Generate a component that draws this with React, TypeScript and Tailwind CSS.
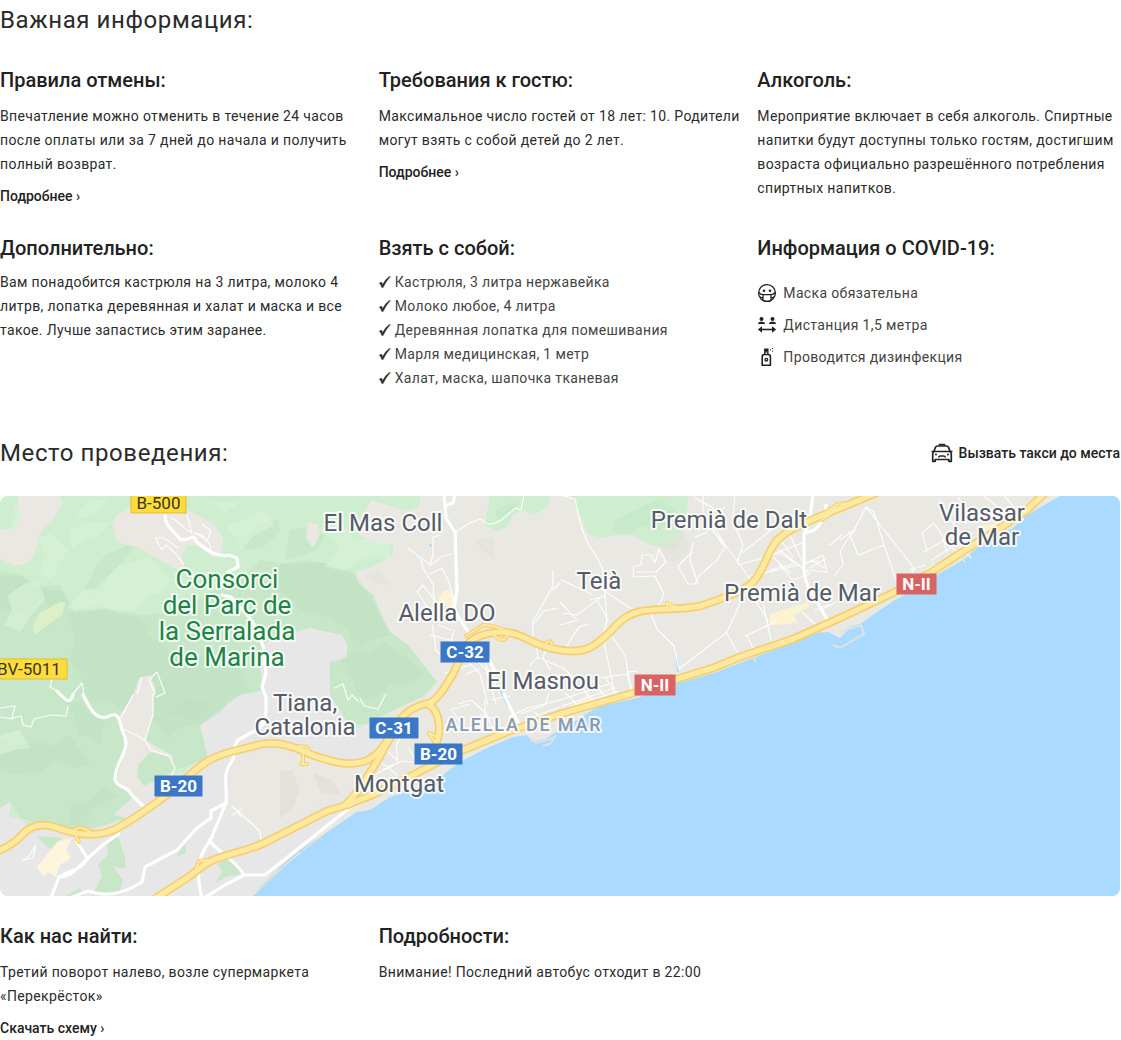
import type { ReactNode } from "react";

const BODY = "text-sm leading-6 tracking-wide text-[#2b2b2b]";

function SectionTitle({ children }: { children: ReactNode }) {
  return <h2 className="text-2xl leading-8 tracking-wide text-[#2b2b2b]">{children}</h2>;
}

function BlockTitle({ children }: { children: ReactNode }) {
  return <h3 className="text-xl leading-8 font-medium text-[#222]">{children}</h3>;
}

function MoreLink({ children }: { children: ReactNode }) {
  return (
    <a href="#" className="mt-2 block w-fit text-sm leading-6 font-medium text-[#222] hover:underline">
      {children} ›
    </a>
  );
}

function InfoBlock({ title, text, link }: { title: string; text: string; link?: string }) {
  return (
    <section>
      <BlockTitle>{title}</BlockTitle>
      <p className={`mt-2 ${BODY}`}>{text}</p>
      {link && <MoreLink>{link}</MoreLink>}
    </section>
  );
}

function CheckIcon() {
  return (
    <svg viewBox="0 0 12 12" className="h-3 w-3 shrink-0" fill="#333" stroke="#333" strokeWidth="0.4" aria-hidden="true">
      <path d="M0.3 7.2 2.200 6c.8.7 1.200 1.400 1.500 2.400C5.500 5 7.700 2.300 10.800 0.300l.6.500C8.600 3.600 6.300 7 4.400 11.200l-1.500.6C2.500 10 1.500 8.400.3 7.200z" />
    </svg>
  );
}

function MaskIcon() {
  return (
    <svg viewBox="0 0 20 20" className="h-5 w-5 shrink-0" fill="none" stroke="#222" strokeWidth="1.3" aria-hidden="true">
      <circle cx="10" cy="10" r="8.400" />
      <path d="M1.800 9.300C3 11 4.500 11.600 6 11.600h8c1.500 0 3-.6 4.200-2.300M6 11.600v4.800c0 1.100 1.300 2 4 2s4-.9 4-2v-4.800M2.400 13.400c1 1 2.200 1.500 3.600 1.600M17.600 13.400c-1 1-2.200 1.500-3.600 1.600" />
      <circle cx="7" cy="7.700" r="1.300" fill="#222" stroke="none" />
      <circle cx="13" cy="7.700" r="1.300" fill="#222" stroke="none" />
    </svg>
  );
}

function DistanceIcon() {
  return (
    <svg viewBox="0 0 20 20" className="h-5 w-5 shrink-0" fill="#222" aria-hidden="true">
      <circle cx="4.500" cy="3.900" r="2" />
      <circle cx="15.500" cy="3.900" r="2" />
      <path d="M1 9c0-1.700 1.400-2.300 3.500-2.300S8 7.300 8 9zM12 9c0-1.700 1.400-2.300 3.500-2.300S19 7.300 19 9z" />
      <path d="M3 14.500h14" stroke="#222" strokeWidth="1.600" />
      <path d="M5 11.300v6.400L.8 14.500zM15 11.300v6.400l4.200-3.200z" />
    </svg>
  );
}

function SprayIcon() {
  return (
    <svg viewBox="0 0 20 20" className="h-5 w-5 shrink-0" fill="none" stroke="#222" strokeWidth="1.600" aria-hidden="true">
      <path d="M5.200 18.200V9.800c0-1.500.9-2.300 2.200-2.300h3.800c1.300 0 2.200.8 2.200 2.300v8.400z" />
      <path d="M7.700 7V4.800h3.200V7" strokeWidth="1.300" />
      <path d="M7 4.600V2.600c0-.7.400-1.100 1-1.100h3.500v3.100z" fill="#222" stroke="none" />
      <circle cx="9.300" cy="12.700" r="1.300" strokeWidth="1.400" />
      <path d="M13 2.800h1M15 1.500h1M15 4.100h1" strokeWidth="1" />
    </svg>
  );
}

function TaxiIcon() {
  return (
    <svg viewBox="0 0 22 20" className="h-5 w-[22px] shrink-0" fill="none" stroke="#222" strokeWidth="1.700" strokeLinejoin="round" aria-hidden="true">
      <path d="M8.500 2.600V1.600h5v1" />
      <path d="M2.800 8.500 4.600 4.200c.4-.8 1-1.200 1.800-1.200h9.200c.8 0 1.400.4 1.800 1.200l1.800 4.300M.5 8.500h21" />
      <path d="M2.800 8.500c-.8.800-1.100 1.600-1.100 2.600v7.200h2.400v-1.800h13.800v1.800h2.400v-7.200c0-1-.3-1.800-1.100-2.600" />
      <path d="M7.500 14.700c.2-1.200.9-1.700 2-1.700h3c1.100 0 1.800.5 2 1.700" strokeWidth="1.400" />
      <path d="M4 11.500h2M16 11.500h2" strokeWidth="1.600" />
    </svg>
  );
}

const TO_BRING = [
  "Кастрюля, 3 литра нержавейка",
  "Молоко любое, 4 литра",
  "Деревянная лопатка для помешивания",
  "Марля медицинская, 1 метр",
  "Халат, маска, шапочка тканевая",
];

const COVID = [
  { icon: <MaskIcon />, text: "Маска обязательна" },
  { icon: <DistanceIcon />, text: "Дистанция 1,5 метра" },
  { icon: <SprayIcon />, text: "Проводится дизинфекция" },
];

const HIGHWAYS = [
  "M-4 852C6 848 12 844 17 840C23 834 28 826 43 825C56 825 66 833 83 834C106 836 117 830 143 812L167 795C178 787 182 781 190 775C202 763 213 757 230 752L262 744C284 741 298 749 315 756C334 762 347 766 362 762C377 758 385 745 392 732C400 716 411 706 430 703C440 697 447 684 454 672L463 652C468 638 483 633 500 632C525 632 530 646 560 650C590 655 598 642 610 632C622 618 631 613 642 611C665 608 682 610 700 606C720 600 745 590 752 583C766 570 768 545 782 536C795 525 825 515 876 493",
  "M156 898L187 878L207 863C225 853 249 852 270 840L327 811L344 806C358 795 371 770 378 760C386 744 391 735 397 728",
  "M348 805C357 800 370 797 380 791L413 775L440 761L463 750L507 732L560 714L637 692L677 679L713 668L740 657L793 639L840 618L893 593L930 573L973 545L1000 528L1027 510L1046 492",
  "M428 704C441 711 441 732 436 745L428 757",
];

const RAMPS = [
  "M466 636L483 625C494 624 506 631 514 634",
  "M493 634C500 642 504 642 508 634",
  "M546 644C549 639 552 641 552 648",
  "M667 609V603L675 607",
  "M303 749V763M301 764H307M297 747C306 745 310 748 308 754",
  "M434 741L429 733L437 737",
  "M70 833C79 825 84 827 91 833M74 832L79 842",
  "M195 872L199 861L208 860",
  "M820 516L838 504L860 502M822 520L841 507",
];

const MAIN_WHITE = [
  "M57 691C67 702 70 704 73 695M83 695C92 712 96 719 107 717C117 711 119 716 122 730C134 750 114 761 115 780C118 789 127 785 131 794L145 808",
  "M165 515C165 526 173 530 180 539C190 543 193 531 196 541C210 554 221 557 229 555L237 558L238 567L228 572",
  "M222 595L231 597L247 615C258 625 260 640 263 646L266 673L262 687L266 697C266 710 267 719 260 728L238 740C232 747 236 755 232 761C221 776 228 783 226 803L211 811V818L197 828L177 850L145 867L142 882C125 893 108 898 88 891L70 898",
  "M51 898L59 877C70 869 80 872 88 858L104 844L119 834M88 859L77 842M60 877C72 877 80 865 88 858",
  "M226 803L210 841C197 856 196 876 202 898M209 840C218 853 233 857 244 875H265L352 806M204 898L225 885L244 875",
  "M444 494L446 518L455 532L457 590L454 610L472 638M447 505L453 503L455 494M487 655L495 672M504 694C512 713 517 720 522 729",
  "M813 494L810 518L804 535V565C802 580 812 592 815 598L828 621M826 505C825 522 815 533 806 532",
];

const MINOR_WHITE = [
  "M0 708L15 706L12 718L21 716L23 725L31 727L34 719L52 715L66 716L68 706M0 717L13 719M73 694L82 683L85 700",
  "M53 674L50 687L59 692M137 694L142 677M153 694L153 715L145 740L124 729M145 740L151 750L169 756L175 768L171 776M133 695L121 718M155 694L149 680L157 672L165 693L156 697",
  "M184 565L177 555L166 545L162 550L155 538L164 538L178 548M171 518C182 522 182 529 192 533L187 515M194 533C206 539 212 541 210 552M202 524L211 531L207 541L202 535L195 533",
  "M232 806L260 831L261 842M232 815L242 809M236 809L241 817M23 861C35 853 37 838 35 850L33 858L23 860",
  "M408 548L419 557L431 565L443 556L453 554M430 565L433 555V537L440 535M421 560C424 579 437 580 433 594L436 602M430 574L442 568L449 582L454 602M436 602L423 585L417 592L427 606L432 616",
  "M432 624L436 650L446 661M438 625L451 630M454 630L450 646L463 655M430 635L450 640M445 673L470 665M466 659L480 674L488 705M475 659L486 669L496 704M482 657L500 694M466 674L479 669M488 685L505 679",
  "M455 532L472 522L481 519C488 528 496 523 501 520L516 508L521 510L524 494M553 571V586L540 609L533 621V640M533 625L544 611L558 608M553 590L560 583M536 645L538 657L530 665",
  "M548 644L543 657L550 670M537 657L563 668L572 676",
  "M575 499L580 522C584 536 590 549 597 557L603 570L605 596L590 600M561 580L592 594M603 590L622 603L634 610M605 596L607 620L601 645M601 597L577 615L563 613M560 602L575 618M578 620L560 625M588 625C578 623 573 637 567 646M604 642L614 690M612 637L625 655L631 690M608 620L597 600",
  "M633 577L634 566L641 565L642 555H651L655 563L659 549L666 562L656 572H637M633 577L655 576L664 594L659 605M651 614L657 629L674 646L679 669",
  "M695 498L713 508L712 530L727 547L738 562L755 586M703 495V515L725 548L717 560L699 576L695 584H688L678 566L692 552M695 537L706 533L712 524L723 541M735 494L733 520L743 545L737 563M743 552L774 528M711 512L725 508M693 542L690 560L698 584",
  "M738 565L780 553L800 566M770 555L802 543M773 557L790 573M780 550L810 574M750 576L800 565M804 565L823 555L827 572L806 570M806 562L819 561M811 560L825 568M810 568L825 559M780 565L792 580L808 575M790 535L801 559M780 539L793 557M770 570L794 564",
  "M747 588L727 632L679 669M726 632L737 652M747 636L755 652M745 636L777 621M763 604L771 640M755 601L768 620M815 610L828 605M803 613L818 627M823 609L836 602",
  "M866 507L854 530L840 540M866 507L914 568L910 581M874 512L884 545L896 580M849 532L858 555L884 545M866 507L874 512M855 530L847 540L840 552M840 550L843 565L835 575M927 550L922 533L934 523L942 535L947 552M924 552L946 539M932 560L953 546M940 500L952 522L971 545M958 498L968 510L966 524M984 496L1014 520M1003 494L1024 520M950 535L971 558M943 539L959 554M910 570L925 565M912 580L934 565",
  "M560 495L575 499M840 600L850 594M830 545L842 535",
  "M458 704L471 700L486 713L495 735M450 710L470 704M453 712L460 722M485 700V724M490 700L510 696M510 716L528 708L560 700M520 714L545 705L549 693M525 720L560 707M535 712L545 724M480 715L500 720",
  "M560 700L612 683M562 706L615 688M570 707L619 691M600 678L627 674L632 690M627 672L638 671M565 693L580 707M580 686L595 703M592 681L606 697M605 677L617 695",
  "M372 755L397 775M383 769L402 761L420 763M376 774L394 765M398 762L396 745L405 731M405 735L418 737M386 750L397 760M409 748L415 760M360 698L364 706L378 709L386 694M335 688L343 684L348 700L352 695L358 701",
];

const SHADES = [
  "M0 570L20 575L38 588L60 590L68 600L64 612L52 610L40 600L22 612L0 610Z",
  "M66 614L84 611L105 610L118 614L140 617L150 628L148 636L160 640L172 655L190 660L208 652L230 650L240 668L250 690L228 700L222 712L200 725L178 716L150 722L125 715L112 700L96 704L80 690L82 678L69 660L76 640Z",
  "M85 590L94 570L105 555L122 548L140 535L128 556L110 575L104 586L95 600Z",
  "M280 565L304 560L325 563L338 572L355 574L366 590L380 615L390 635L372 640L355 650L347 628L330 618L300 610L288 595L275 590Z",
  "M290 530L308 527L325 535L318 548L305 555L285 560Z",
  "M65 700L82 703L90 714L105 722L100 745L88 736L78 735L74 716Z",
  "M0 740L20 745L38 740L52 746L70 735L90 765L72 768L55 760L40 772L18 775L0 770Z",
  "M70 805L90 800L105 787L118 796L94 807L90 815L85 825L70 825Z",
  "M340 660L352 650L370 652L385 642L404 656L425 675L408 684L390 685L376 698L360 700L352 680Z",
  "M155 720L172 712L185 698L215 702L192 725L178 728L168 740Z",
  "M236 540L248 534L256 524L278 520L280 532L262 548L246 550Z",
];

const HIGHLIGHTS = [
  "M38 540L50 533L68 550L60 562L52 580L42 576L40 568L46 556Z",
  "M67 608L84 590L96 588L120 565L136 562L148 556L158 566L170 580L160 592L150 595L136 610L120 612L98 606L75 610Z",
  "M90 500L108 500L95 514L75 520L80 508Z",
  "M8 595L24 584L38 580L45 600L34 612L20 632L5 625L12 610Z",
  "M320 530L338 515L344 526L355 540L390 541L390 558L374 556L360 560L344 570L325 567L334 556L340 545Z",
  "M70 530L88 522L110 523L100 535L86 540L72 548Z",
  "M15 505L50 512L42 522L35 535L10 530Z",
  "M225 525L244 520L265 510L274 525L256 534L240 550L236 538Z",
  "M205 500L240 503L225 512Z",
  "M0 735L20 730L30 748L14 750L0 755Z",
  "M632 505L654 498L648 515L636 514L625 520Z",
];

type Place = { x: number; y: number; lines: string[] };

const PLACES: Place[] = [
  { x: 383, y: 531, lines: ["El Mas Coll"] },
  { x: 729, y: 528, lines: ["Premià de Dalt"] },
  { x: 982, y: 521, lines: ["Vilassar", "de Mar"] },
  { x: 599, y: 589, lines: ["Teià"] },
  { x: 802, y: 601, lines: ["Premià de Mar"] },
  { x: 447, y: 621, lines: ["Alella DO"] },
  { x: 543, y: 689, lines: ["El Masnou"] },
  { x: 305, y: 711, lines: ["Tiana,", "Catalonia"] },
  { x: 399, y: 792, lines: ["Montgat"] },
];

const PARK = ["Consorci", "del Parc de", "la Serralada", "de Marina"];

const SHIELDS = [
  { x: 131, y: 493, w: 55, text: "B-500", fill: "#fddc3b", ink: "#3a3520", edge: "#e2bf2e" },
  { x: -9, y: 659, w: 76, text: "BV-5011", fill: "#fddc3b", ink: "#3a3520", edge: "#e2bf2e" },
  { x: 441, y: 642, w: 48, text: "C-32", fill: "#3a77c7", ink: "#fff", edge: "#3a77c7" },
  { x: 370, y: 718, w: 48, text: "C-31", fill: "#3a77c7", ink: "#fff", edge: "#3a77c7" },
  { x: 415, y: 744, w: 47, text: "B-20", fill: "#3a77c7", ink: "#fff", edge: "#3a77c7" },
  { x: 155, y: 776, w: 47, text: "B-20", fill: "#3a77c7", ink: "#fff", edge: "#3a77c7" },
  { x: 635, y: 675, w: 40, text: "N-II", fill: "#d96262", ink: "#fff", edge: "#d96262" },
  { x: 897, y: 574, w: 39, text: "N-II", fill: "#d96262", ink: "#fff", edge: "#d96262" },
];

function CoastMap() {
  return (
    <svg
      viewBox="0 496 1120 400"
      preserveAspectRatio="xMidYMid slice"
      className="mt-[27px] block h-[400px] w-full rounded-lg"
      role="img"
      aria-label="Карта места проведения"
      fontFamily="Roboto, sans-serif"
    >
      <rect x="0" y="496" width="1120" height="400" fill="#e9e8e3" />
      <path fill="#e7e7e8" d="M0 808L110 815L187 770L210 720L240 695L262 645L300 633L342 635L347 658L330 662V695L360 728L400 730L383 760L350 765L350 805L280 867L253 896H0Z" />
      <path fill="#ebe8e4" d="M233 758L290 746L350 768L360 785L300 815L262 838L228 803Z" />
      <path fill="#e2e1db" d="M280 772L292 770L300 790L292 810L280 818ZM313 773L332 780L340 795L320 792Z" />
      {/* wooded hills */}
      <path fill="#ceeecf" d="M0 496H420L419 507L407 511L388 505L372 500L358 520L357 533L372 543L393 545V555L380 563L355 573L358 583L373 595L380 612L390 632L408 645L437 682L424 696L398 708L378 714L365 725L358 728L347 722L337 705L330 695V662L347 658V645L342 635L310 628L297 633L280 634L263 645L260 668L264 690L240 695L227 705L200 725L208 758L190 765L184 773L150 778L128 802L113 815L127 818L83 832L43 825L27 825L20 818H10V802L0 808Z" />
      <path fill="#c8e7c8" d="M0 575L22 576L40 586L60 585L68 600L75 612L110 608L140 615L168 612L180 602L200 600L222 584L240 580L260 560L290 564L320 562L355 573L358 583L373 595L380 612L390 632L408 645L437 682L424 696L398 708L365 725L347 722L330 695V662L347 658V645L342 635L310 628L280 634L263 645L260 668L264 690L240 695L227 705L200 725L208 758L190 765L150 778L128 802L113 815L127 818L83 832L43 825L20 818L10 802L0 808Z" />
      {SHADES.map((d) => (
        <path key={d} d={d} fill="#b9dfbd" opacity="0.3" />
      ))}
      {HIGHLIGHTS.map((d) => (
        <path key={d} d={d} fill="#daf4d8" opacity="0.6" />
      ))}
      <path fill="#dcefc9" d="M33 625L40 613L60 602L66 603L62 615L34 635Z" />
      <path fill="#ceeecf" d="M572 496H688L687 512L680 528L682 538L675 550L650 545L633 535H615L600 538L588 533L580 515ZM490 496H550L547 508L533 515L523 510L513 515L507 527L497 531L485 525Z" />
      <path fill="#bfe5c3" opacity="0.4" d="M615 520L640 508L660 498L675 510L660 530L640 526L632 534L610 532ZM495 510L520 500L515 512L498 520Z" />
      {/* clearings */}
      <path fill="#ebe8e4" d="M18 496H60L63 503L52 520L40 533L35 553L28 563L13 566L0 558V530L12 529L21 520L18 510ZM112 522L117 515L130 508L187 510L213 523L223 538L222 552L213 558L200 547L187 545L182 555L185 572L172 567L160 560L140 548L117 542ZM308 523L318 524L320 535L313 548L306 538ZM133 695H153V715L145 740L173 756L170 776L155 778L133 795L116 780L124 755L127 735L118 718Z" />
      <path fill="#ebe8e4" d="M133 696L139 678L150 675L156 690L153 700Z" />
      <path fill="#c8e7c8" d="M138 765L150 752L170 757L175 770L158 780L144 786L137 777Z" />
      <path fill="#c8e7c8" d="M108 841L118 836L125 857V869L113 866L123 880L120 891L92 896L102 876L98 865L107 855ZM177 854L185 844L186 853L178 856ZM217 864L230 858L238 866L242 874L225 877L215 884L222 872ZM37 836L62 838L55 850L47 847ZM65 896L80 888L85 896Z" />
      <path fill="#fdf5dc" d="M37 867L58 841L72 838L66 850L71 858L60 865L56 877L48 872L43 876Z" />
      <path fill="#fdf3d3" d="M442 592L449 590L456 597L453 606L436 604ZM770 614L808 602L809 607L794 615L797 622L787 624L770 625ZM980 526L1003 521L1002 535L980 543ZM582 699L595 697L590 708L570 706Z" />
      <path fill="#e2e1db" opacity="0.6" d="M475 540L493 538L495 560L482 550ZM365 575L380 570L390 585L372 583ZM660 545L682 530L690 545L676 562L665 560Z" />
      {/* sea */}
      <path fill="#aadaff" d="M253 896L264 883L280 867L300 850L330 830L357 812L370 810L390 797L415 789L443 775L460 762L487 748L513 737L527 735L532 742L545 739L560 730L580 718L597 707L637 698L675 684L717 672L753 658L790 644L813 633L828 632L840 638L850 627L862 623L877 612L895 600L920 587L937 575L963 560L977 548L1013 528L1027 515L1060 496H1120V896Z" />
      <path d="M840 632L861 625L864 634L840 648L833 645M754 657L755 662M963 558L965 563M530 738L536 743L553 738M543 746L550 744L556 735" fill="none" stroke="#dce3e3" strokeWidth="2" />
      <path d="M500 690L515 716M677 658L678 672M503 696L508 706" fill="none" stroke="#aadaff" strokeWidth="2" />
      <path d="M430 544L431 547" stroke="#aadaff" strokeWidth="2" />
      <path d="M255 894L282 868L300 852M262 884L330 829" fill="none" stroke="#f4e9c8" strokeWidth="1" />
      {/* streets */}
      <g fill="none" stroke="#fff" strokeLinecap="round" strokeLinejoin="round">
        {MINOR_WHITE.map((d) => (
          <path key={d} d={d} strokeWidth="1.200" opacity="0.900" />
        ))}
        {MAIN_WHITE.map((d) => (
          <path key={d} d={d} strokeWidth="3.200" />
        ))}
      </g>
      {/* highways: casing first, then the lighter core */}
      <g fill="none" strokeLinecap="round" strokeLinejoin="round">
        <g stroke="#f5cf6c">
          {RAMPS.map((d) => (
            <path key={d} d={d} strokeWidth="4" />
          ))}
          {HIGHWAYS.map((d) => (
            <path key={d} d={d} strokeWidth="8.500" />
          ))}
        </g>
        <g stroke="#ffe89f">
          {RAMPS.map((d) => (
            <path key={d} d={d} strokeWidth="2" />
          ))}
          {HIGHWAYS.map((d) => (
            <path key={d} d={d} strokeWidth="5.200" />
          ))}
        </g>
      </g>
      <g textAnchor="middle" stroke="#fff" strokeOpacity="0.800" strokeWidth="4" strokeLinejoin="round" paintOrder="stroke">
        {PLACES.map((p) => (
          <text key={p.lines[0]} y={p.y} fontSize="24" fill="#545c68">
            {p.lines.map((line, i) => (
              <tspan key={line} x={p.x} dy={i === 0 ? 0 : 24}>
                {line}
              </tspan>
            ))}
          </text>
        ))}
        <text y="588" fontSize="26" fill="#1c8546">
          {PARK.map((line, i) => (
            <tspan key={line} x="227" dy={i === 0 ? 0 : 26}>
              {line}
            </tspan>
          ))}
        </text>
        <text x="524" y="731" fontSize="18" fontWeight="500" fill="#8798b0" className="tracking-widest">
          ALELLA DE MAR
        </text>
      </g>
      {SHIELDS.map((s) => (
        <g key={`${s.text}-${s.x}`}>
          <rect x={s.x} y={s.y} width={s.w} height="20" fill={s.fill} stroke={s.edge} />
          <text x={s.x + s.w / 2} y={s.y + 16} textAnchor="middle" fontSize="17" fontWeight={s.ink === "#fff" ? 700 : 400} fill={s.ink}>
            {s.text}
          </text>
        </g>
      ))}
    </svg>
  );
}

export default function App() {
  return (
    <main className="mr-px bg-white pt-1 font-['Roboto',sans-serif]">
      <SectionTitle>Важная информация:</SectionTitle>
      <div className="mt-7 grid grid-cols-3 gap-x-4 gap-y-6">
        <InfoBlock
          title="Правила отмены:"
          text="Впечатление можно отменить в течение 24 часов после оплаты или за 7 дней до начала и получить полный возврат."
          link="Подробнее"
        />
        <InfoBlock
          title="Требования к гостю:"
          text="Максимальное число гостей от 18 лет: 10. Родители могут взять с собой детей до 2 лет."
          link="Подробнее"
        />
        <InfoBlock
          title="Алкоголь:"
          text="Мероприятие включает в себя алкоголь. Спиртные напитки будут доступны только гостям, достигшим возраста официально разрешённого потребления спиртных напитков."
        />
        <section>
          <BlockTitle>Дополнительно:</BlockTitle>
          <p className={`mt-1.5 ${BODY}`}>
            Вам понадобится кастрюля на 3 литра, молоко 4 литрв, лопатка деревянная и халат и маска и все такое. Лучше
            запастись этим заранее.
          </p>
        </section>
        <section>
          <BlockTitle>Взять с собой:</BlockTitle>
          <ul className="mt-1.5 text-sm leading-6 tracking-wide text-[#444]">
            {TO_BRING.map((item) => (
              <li key={item} className="flex items-center gap-1">
                <CheckIcon />
                {item}
              </li>
            ))}
          </ul>
        </section>
        <section>
          <BlockTitle>Информация о COVID-19:</BlockTitle>
          <ul className="mt-[13px] text-sm leading-8 tracking-wide text-[#444]">
            {COVID.map((item) => (
              <li key={item.text} className="flex items-center gap-1.5">
                {item.icon}
                {item.text}
              </li>
            ))}
          </ul>
        </section>
      </div>

      <div className="mt-[47px] flex items-center justify-between">
        <SectionTitle>Место проведения:</SectionTitle>
        <button type="button" className="flex items-center gap-1.5 text-sm leading-6 font-medium text-[#222]">
          <TaxiIcon />
          Вызвать такси до места
        </button>
      </div>
      <CoastMap />

      <div className="mt-6 grid grid-cols-3 gap-x-4">
        <InfoBlock title="Как нас найти:" text="Третий поворот налево, возле супермаркета «Перекрёсток»" link="Скачать схему" />
        <InfoBlock title="Подробности:" text="Внимание! Последний автобус отходит в 22:00" />
      </div>
    </main>
  );
}
